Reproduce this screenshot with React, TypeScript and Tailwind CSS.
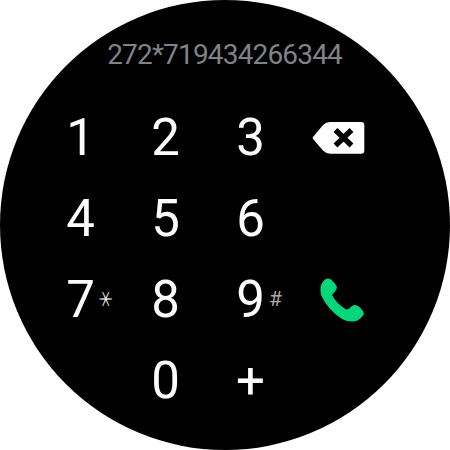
const key = "flex items-center justify-center relative";
export default function App() {
  return (
    <div className="w-[450px] h-[450px] bg-white overflow-hidden antialiased">
      <div className="w-[450px] h-[450px] rounded-full bg-black text-[#fcfcfc] font-[Roboto,sans-serif] flex flex-col items-center">
        <div className="mt-[38px] h-[34px] leading-[34px] text-[28px] tracking-[-0.83px] text-[#7f8386] whitespace-nowrap w-[234px] flex justify-end">272*719434266344</div>
        <div className="mt-[25px] w-[340px] mr-[34px] grid grid-cols-[85px_85px_85px_85px] auto-rows-[81px] text-[51px] leading-[53px]">
          <div className={key}>1</div>
          <div className={key}>2</div>
          <div className={key}>3</div>
          <div className={key}>
            <svg className="relative left-[2px]" width="54" height="36" viewBox="311 120 54 36"><path d="M313 137Q312.300 138 313 139L323 150.500Q326 153.700 330 153.700H361Q364.300 153.700 364.300 150.500V125Q364.300 122 361 122H330Q326 122 323 125Z" fill="white" /><path d="M335.500 130L351.500 145.500M351.500 130L335.500 145.500" stroke="black" strokeWidth="5.500" /></svg>
          </div>
          <div className={key}>4</div>
          <div className={key}>5</div>
          <div className={key}>6</div>
          <div />
          <div className={key}>7<span className="absolute left-[59px] top-[30px] w-5 h-5 leading-5 text-[21px] text-[#ddd] font-['Noto_Sans_CJK_SC',sans-serif] rotate-90 scale-y-[0.78] flex items-center justify-center">＊</span></div>
          <div className={key}>8</div>
          <div className={key}>9<span className="absolute left-[61px] text-[21px] text-[#aaa]">#</span></div>
          <div className={key}>
            <svg className="relative left-[6px]" width="44" height="46" viewBox="320 277 44 46"><path d="M325 279.500Q328 277.500 331 279.500Q337 285 337 288Q336 291 332 295Q336 303 346 309.500Q349 309.500 352 306Q356 303 361 308.500Q364 311.500 364 314Q360 320.500 354 321.500Q347 322 342 319Q328 310 321 295Q319 284 325 279.500Z" fill="#03d67b" /></svg>
          </div>
          <div />
          <div className={key}>0</div>
          <div className={key}>+</div>
        </div>
      </div>
    </div>
  );
}
